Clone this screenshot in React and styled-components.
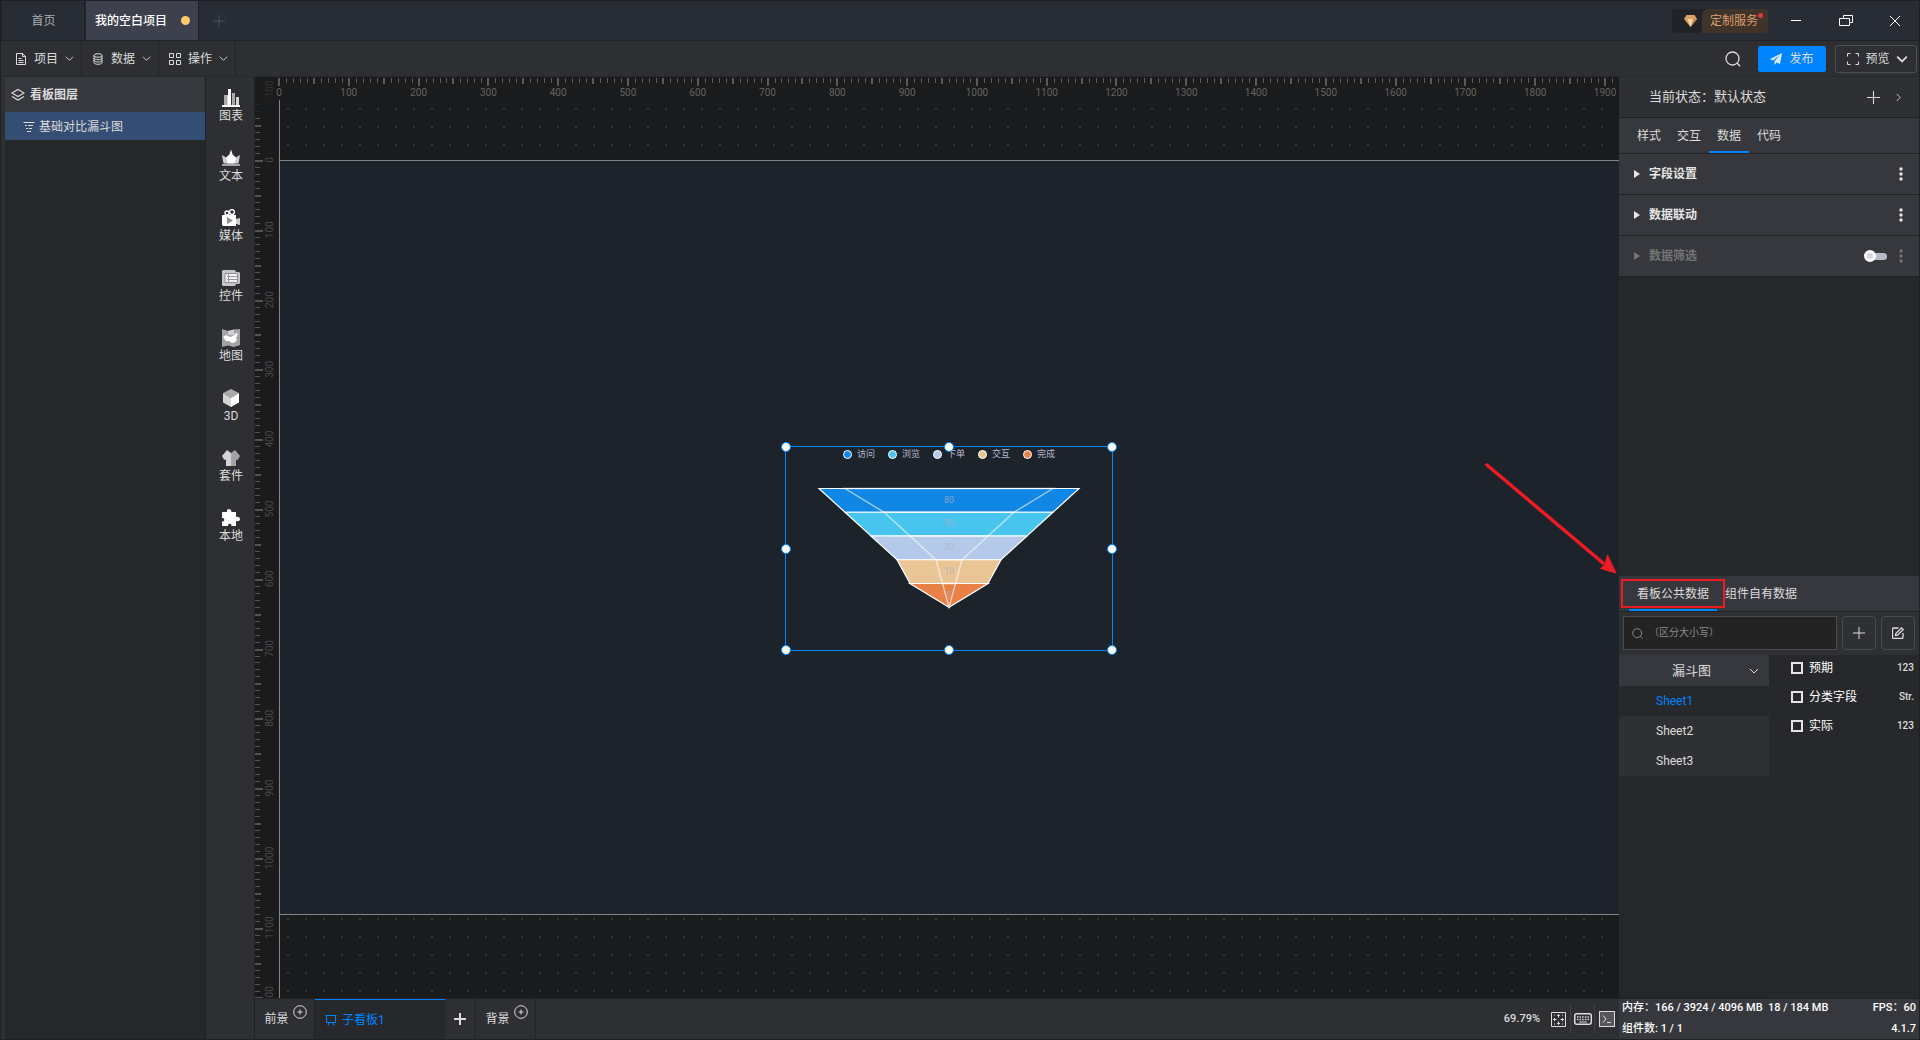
import React, { useState } from 'react';
import styled, { createGlobalStyle, css } from 'styled-components';

const GlobalStyle = createGlobalStyle`
  *, *::before, *::after {
    box-sizing: border-box;
  }
  body {
    margin: 0;
    background: #1a1b1c;
    color: #dcdcdc;
    font-family: Roboto, "Noto Sans CJK SC", sans-serif;
    font-size: 12px;
    line-height: 16px;
    overflow: hidden;
  }
  button, input {
    font: inherit;
    color: inherit;
  }
  svg {
    display: block;
    flex: none;
  }
`;

const Button = styled.button`
  display: flex;
  align-items: center;
  justify-content: center;
  padding: 0;
  border: 0;
  background: none;
  cursor: pointer;
  white-space: nowrap;
`;

const Window = styled.div`
  height: 100vh;
  display: flex;
  flex-direction: column;
  border: 1px solid #1f2023;
  border-top: 0;
  background: #2e2f33;
`;

/* title bar */

const TitleBar = styled.header`
  display: flex;
  flex: none;
  height: 41px;
  border-top: 1px solid #1f2023;
  border-bottom: 1px solid #202124;
  background: #282c34;
`;

const ProjectTab = styled(Button)`
  width: ${({ $active }) => ($active ? 114 : 84)}px;
  gap: 14px;
  padding-left: 1px;
  border: solid #1f2228;
  border-width: 0 1px;
  background: ${({ $active }) => ($active ? '#3d414e' : 'transparent')};
  color: ${({ $active }) => ($active ? '#fff' : '#a9acb2')};
  font-weight: ${({ $active }) => ($active ? 500 : 400)};
`;

const UnsavedDot = styled.span`
  width: 9px;
  height: 9px;
  border-radius: 50%;
  background: #fdca6b;
`;

const AddTab = styled(Button)`
  width: 40px;
  color: #4c5058;
`;

const WindowActions = styled.div`
  display: flex;
  align-items: center;
  margin-left: auto;
`;

const ServiceButton = styled(Button)`
  height: 24px;
  margin-right: 3px;
  border-radius: 3px;
  background: #222328;
  color: #dc9f6e;
`;

const ServiceGem = styled.span`
  display: flex;
  justify-content: center;
  width: 30px;
  padding-left: 6px;
`;

const ServiceLabel = styled.span`
  position: relative;
  width: 66px;
  padding-right: 2px;
  line-height: 24px;
  border-radius: 6px 3px 3px 0;
  background: #403329;
  &::after {
    content: '';
    position: absolute;
    top: 4px;
    right: 5px;
    width: 5px;
    height: 5px;
    border-radius: 50%;
    background: #e0373b;
  }
`;

const WindowButton = styled(Button)`
  width: 50px;
  height: 40px;
  color: #fff;
  &:last-child {
    width: 48px;
  }
`;

/* toolbar */

const Toolbar = styled.nav`
  display: flex;
  flex: none;
  height: 36px;
  padding-left: 4px;
  align-items: center;
  border-bottom: 1px solid #28292c;
`;

const MenuButton = styled(Button)`
  width: 77px;
  height: 35px;
  gap: 7px;
  padding-left: 3px;
  border-right: 1px solid #232427;
`;

const ToolbarActions = styled.div`
  display: flex;
  align-items: center;
  margin-left: auto;
  padding-right: 2px;
`;

const PublishButton = styled(Button)`
  width: 68px;
  height: 26px;
  margin: 0 9px 0 17px;
  gap: 7px;
  border-radius: 2px;
  background: #0085ff;
`;

const PreviewButton = styled(Button)`
  width: 82px;
  height: 28px;
  gap: 6px;
  padding-left: 3px;
  border: 1px solid #4c4d52;
  border-radius: 3px;
`;

/* left side */

const Body = styled.div`
  display: flex;
  flex: 1;
  min-height: 0;
  padding-left: 4px;
`;

const LayerPanel = styled.aside`
  flex: none;
  width: 201px;
  border-right: 1px solid #202124;
  background: #262729;
`;

const PanelTitle = styled.h2`
  display: flex;
  align-items: center;
  gap: 5px;
  height: 35px;
  margin: 0;
  padding-left: 6px;
  background: #37383d;
  font-size: 12px;
  font-weight: 700;
`;

const LayerItem = styled(Button)`
  justify-content: flex-start;
  width: 200px;
  height: 28px;
  gap: 4px;
  padding: 2px 0 0 18px;
  background: #344d73;
`;

const ToolColumn = styled.nav`
  flex: none;
  width: 49px;
  border-right: 1px solid #202124;
`;

const ToolButton = styled(Button)`
  flex-direction: column;
  justify-content: flex-start;
  width: 48px;
  height: 60px;
  gap: 1px;
  padding: 12px 0 0 2px;
`;

/* workspace */

const Center = styled.main`
  display: flex;
  flex: 1;
  flex-direction: column;
  min-width: 0;
`;

const Workspace = styled.div`
  display: grid;
  flex: 1;
  grid-template-columns: 24px 1fr;
  grid-template-rows: 23px 1fr;
  min-height: 0;
  overflow: hidden;
  background: #1a1b1c;
`;

const Corner = styled.div`
  width: 24px;
  height: 23px;
`;

const RulerSvg = styled.svg`
  overflow: visible;
  font-family: "Liberation Sans Narrow", Roboto, sans-serif;
  font-size: 10px;
`;

const CanvasArea = styled.div`
  min-height: 0;
  padding-top: 60px;
  overflow: hidden;
  border-left: 1px solid #858585;
  background: radial-gradient(circle at 9px 9px, #333435 1px, transparent 1px) -1px 0 / 18px 18px;
`;

const Stage = styled.div`
  position: relative;
  aspect-ratio: 1920 / 1082;
  border: solid #858585;
  border-width: 1px 0;
  background: #1c232a;
`;

const Widget = styled.section`
  position: absolute;
  left: 505px;
  top: 285px;
  width: 328px;
  height: 205px;
  border: 1px solid #0085ff;
`;

const Legend = styled.ul`
  display: flex;
  justify-content: center;
  gap: 13px;
  margin: 0;
  padding: 1px 0 0;
  list-style: none;
  color: #b9b8ce;
  font-size: 9px;
  line-height: 12px;
`;

const LegendItem = styled.li`
  display: flex;
  align-items: center;
  gap: 5px;
  &::before {
    content: '';
    width: 9px;
    height: 9px;
    border: 1px solid #fff;
    border-radius: 50%;
    background: ${({ $color }) => $color};
  }
`;

const FunnelSvg = styled.svg`
  font-size: 9px;
`;

const Handle = styled.span`
  position: absolute;
  left: ${({ $x }) => $x}%;
  top: ${({ $y }) => $y}%;
  width: 10px;
  height: 10px;
  margin: -5px;
  border: 1px solid #0085ff;
  border-radius: 50%;
  background: #fff;
`;

/* bottom bar */

const BottomBar = styled.footer`
  display: flex;
  flex: none;
  align-items: center;
  height: 41px;
  border-top: 1px solid #232427;
`;

const SceneButton = styled(Button)`
  height: 40px;
  width: 60px;
  gap: 4px;
  padding-left: 2px;
  border-right: 1px solid #232427;
  svg {
    margin-bottom: 14px;
  }
`;

const BoardTab = styled(Button)`
  justify-content: flex-start;
  width: 130px;
  height: 40px;
  gap: 5px;
  padding-left: 10px;
  border-top: 1px solid #0085ff;
  background: #27282c;
  color: #0085ff;
`;

const AddBoard = styled(Button)`
  width: 31px;
  height: 40px;
  border-right: 1px solid #232427;
`;

const ZoomValue = styled.span`
  margin-left: auto;
  padding-right: 7px;
  font-size: 11px;
  font-weight: 500;
`;

const BottomAction = styled(Button)`
  width: 24px;
  height: 28px;
  border-right: ${({ $last }) => ($last ? 0 : '1px solid #414246')};
`;

/* right side */

const Inspector = styled.aside`
  display: grid;
  flex: none;
  grid-template-rows: 500fr 422fr 41px;
  width: 300px;
  background: #262729;
`;

const StateBar = styled.div`
  display: flex;
  align-items: center;
  height: 41px;
  padding: 0 17px 0 30px;
  border-bottom: 1px solid #202124;
  background: #2f3033;
  font-size: 13px;
`;

const StateAdd = styled(Button)`
  margin: 0 15px 0 auto;
`;

const TabList = styled.div`
  display: flex;
  height: 36px;
  padding-left: 10px;
  border-bottom: 1px solid #202124;
  background: #37383d;
`;

const PanelTab = styled(Button)`
  position: relative;
  padding: 0 8px;
  border: solid transparent;
  border-width: 2px 0;
  ${({ $active }) => $active && css`
    border-bottom-color: #0085ff;
  `}
`;

const Section = styled.div`
  display: flex;
  align-items: center;
  height: 41px;
  padding: 0 16px 0 15px;
  border-bottom: 1px solid #202124;
  background: #37383d;
  color: ${({ $disabled }) => ($disabled ? '#737478' : '#e6e6e6')};
`;

const SectionTitle = styled(Button)`
  gap: 9px;
  margin-right: auto;
  font-weight: 700;
`;

const Switch = styled.input`
  appearance: none;
  position: relative;
  width: 22px;
  height: 7px;
  margin: 0 12px 0 0;
  border-radius: 4px;
  background: #b9bbca;
  &::before {
    content: '';
    position: absolute;
    left: -1px;
    top: -3px;
    width: 12px;
    height: 12px;
    border: 3px solid #fff;
    border-radius: 50%;
    background: #d5d5da;
  }
`;

const DataPanel = styled.section`
  position: relative;
  display: flex;
  flex-direction: column;
  min-height: 0;
`;

const RedBox = styled.span`
  position: absolute;
  left: 2px;
  top: 3px;
  width: 104px;
  height: 29px;
  border: 2px solid #ed1c24;
  pointer-events: none;
`;

const ArrowSvg = styled.svg`
  position: absolute;
  left: -134px;
  top: -114px;
  pointer-events: none;
`;

const SearchRow = styled.div`
  display: flex;
  gap: 5px;
  height: 43px;
  padding: 4px;
  background: #2f3033;
`;

const SearchBox = styled.label`
  display: flex;
  flex: 1;
  align-items: center;
  gap: 6px;
  height: 34px;
  padding-left: 8px;
  border: 1px solid #4a4b4f;
  background: #232324;
  color: #8c8c8c;
`;

const SearchInput = styled.input`
  flex: 1;
  width: 100%;
  padding: 0;
  border: 0;
  outline: 0;
  background: none;
  font-size: 10px;
  &::placeholder {
    color: #8c8c8c;
  }
`;

const SquareButton = styled(Button)`
  width: 34px;
  height: 34px;
  border: 1px solid #4a4b4f;
  border-radius: 4px;
`;

const DataColumns = styled.div`
  display: flex;
  flex: 1;
`;

const SheetList = styled.div`
  width: 150px;
`;

const SheetGroup = styled(Button)`
  position: relative;
  width: 150px;
  height: 31px;
  padding-right: 5px;
  background: #37383d;
  font-size: 13px;
  svg {
    position: absolute;
    right: 10px;
  }
`;

const SheetButton = styled(Button)`
  justify-content: flex-start;
  width: 150px;
  height: 30px;
  padding-left: 37px;
  background: ${({ $active }) => ($active ? '#27282c' : '#2f3033')};
  color: ${({ $active }) => ($active ? '#0085ff' : '#dcdcdc')};
`;

const FieldList = styled.div`
  flex: 1;
  background: #27282c;
`;

const Field = styled.label`
  display: flex;
  align-items: center;
  gap: 6px;
  height: 29px;
  padding: 0 5px 3px 22px;
  color: #fff;
`;

const FieldCheck = styled.input`
  appearance: none;
  width: 12px;
  height: 12px;
  margin: 0;
  border: 2px solid #e4e4e4;
`;

const FieldType = styled.span`
  margin-left: auto;
  color: #dcdcdc;
  font-size: 10px;
  font-weight: 500;
`;

const Stats = styled.div`
  display: flex;
  flex-wrap: wrap;
  align-content: center;
  row-gap: 5px;
  padding: 0 3px;
  border-top: 1px solid #232427;
  background: #37383d;
  color: #fff;
  font-size: 11px;
  font-weight: 500;
`;

const StatsLine = styled.div`
  display: flex;
  justify-content: space-between;
  width: 100%;
`;

const StrokeSvg = ({ size = 12, box = 12, width = 1, children, ...rest }) => (
  <svg
    width={size}
    height={size}
    viewBox={`0 0 ${box} ${box}`}
    fill="none"
    stroke="currentColor"
    strokeWidth={width}
    {...rest}
  >
    {children}
  </svg>
);

const Plus = ({ size = 12, width = 1 }) => (
  <StrokeSvg size={size} width={width}>
    <path d="M6 0v12M0 6h12" />
  </StrokeSvg>
);

const Chevron = ({ size = 9, width = 1 }) => (
  <StrokeSvg size={size} box={10} width={width}>
    <path d="M1 3l4 4 4-4" />
  </StrokeSvg>
);

const SearchIcon = ({ size = 16, width = 1 }) => (
  <StrokeSvg size={size} box={16} width={width}>
    <circle cx="7.5" cy="7.5" r="6.5" />
    <path d="M12 12l3.2 3.2" />
  </StrokeSvg>
);

const MoreDots = () => (
  <svg width="4" height="14" viewBox="0 0 4 14" fill="currentColor">
    <circle cx="2" cy="2" r="1.7" />
    <circle cx="2" cy="7" r="1.7" />
    <circle cx="2" cy="12" r="1.7" />
  </svg>
);

const CirclePlus = () => (
  <StrokeSvg size={14} box={14}>
    <circle cx="7" cy="7" r="6.3" />
    <path d="M7 4.5v5M4.5 7h5" />
  </StrokeSvg>
);

const menus = [
  {
    name: '项目',
    icon: <path d="M1.5 .5h6l3 3v8h-9zM7.5 .5v3h3M3.5 5.5h3M3.5 7.5h5M3.5 9.5h5" />,
  },
  {
    name: '数据',
    icon: (
      <>
        <ellipse cx="6" cy="2.5" rx="4" ry="1.8" />
        <path d="M2 2.5v7c0 2.4 8 2.4 8 0v-7M2 5c0 2.3 8 2.3 8 0M2 7.3c0 2.3 8 2.3 8 0" />
      </>
    ),
  },
  {
    name: '操作',
    icon: <path d="M.5 .5h4v4h-4zM7.5 .5h4v4h-4zM.5 7.5h4v4h-4zM7.5 7.5h4v4h-4z" />,
  },
];

const tools = [
  {
    name: '图表',
    icon: (
      <>
        <path fill="#aaabad" d="M2 6h3v10H2zM10 4h3v12h-3z" />
        <path fill="#fff" d="M6 0h3v16H6zM0 16h18v2H0z" />
        <path fill="#d4d4d5" d="M14 8h3v8h-3zM5 6h1v10H5z" />
      </>
    ),
  },
  {
    name: '文本',
    icon: (
      <>
        <path fill="#cfcfd1" d="M0 6l5 3h8l5-3-1.5 8.5h-15z" />
        <path fill="#fff" d="M9 .5l1.6 5L14 8.5l-1.5 6h-7L4 8.5l3.4-3z" />
        <path fill="#a2a3a6" d="M0 15h18v2H0z" />
      </>
    ),
  },
  {
    name: '媒体',
    icon: (
      <>
        <circle cx="5" cy="4" r="2" fill="none" stroke="#fff" strokeWidth="1.4" />
        <circle cx="10" cy="3" r="2.4" fill="none" stroke="#fff" strokeWidth="1.4" />
        <path fill="#fff" d="M0 6h14v11H1l-1-1z" />
        <path fill="#cfcfd1" d="M14 10l4-1v7l-4-1z" />
        <path fill="#8d8e91" d="M5 8l6 3.5L5 15z" />
      </>
    ),
  },
  {
    name: '控件',
    icon: (
      <>
        <path fill="#c4c5c7" d="M1 1h12l1 2h3l1 1v10l-1 1h-3l-1 2H1l-1-1V2z" />
        <path fill="#f2f2f2" stroke="#8d8e91" d="M3 4.5h12.5v9H3z" />
        <path stroke="#97989b" d="M5 7.5h10M5 10.5h10M6.5 5v8" />
      </>
    ),
  },
  {
    name: '地图',
    icon: (
      <>
        <path fill="#a2a3a6" d="M0 0l6 2 6-1.5L18 0v16l-6 2-6-1.5L0 18z" />
        <path fill="#cfcfd1" d="M6 2l6-1.5V6H6z" />
        <path fill="#fff" d="M1 8l3-2 4 2 3-1 3-3 2 1-2 4 1 2-3 3-3-.5L7 12H4z" />
      </>
    ),
  },
  {
    name: '3D',
    icon: (
      <>
        <path fill="#a8a9ab" d="M9 0l8 4-8 5-8-5z" />
        <path fill="#d4d4d5" d="M1 4l8 5v9l-8-4.5z" />
        <path fill="#fff" d="M17 4L9 9v9l8-4.5z" />
      </>
    ),
  },
  {
    name: '套件',
    icon: (
      <>
        <path fill="#d4d4d5" d="M5 1l4 3v13H4v-6l-2-.5L0 7z" />
        <path fill="#a2a3a6" d="M13 1L9 4v13h5v-6l2-.5L18 7z" />
      </>
    ),
  },
  {
    name: '本地',
    icon: (
      <path
        fill="#fff"
        d="M0 3h5C4.500 1 6-.2 7.500 .2S9.800 2 9.300 3H14v5c2-.8 4 .2 4 2s-2 2.800-4 2v5H9.500c.5-3-4-3-3.500 0H0v-4.500c3 .4 3-4 0-3.500z"
      />
    ),
  },
];

const SCALE = 0.6979;

const tickLength = (index) => {
  if (index % 10 === 0) return 8;
  return index % 5 === 0 ? 6 : 5;
};

const range = (from, to) => Array.from({ length: to - from + 1 }, (_, i) => i + from);

function TopRuler() {
  return (
    <RulerSvg width="100%" height="23">
      {range(0, 191).map((i) => {
        const big = i % 5 === 0;
        return (
          <rect
            key={i}
            x={Math.round(i * 10 * SCALE) - (big ? 1 : 0)}
            y="1"
            width={big ? 2 : 1}
            height={tickLength(i)}
            fill="#5c5a58"
          />
        );
      })}
      {range(0, 19).map((i) => (
        <text key={i} x={i * 100 * SCALE} y="19" textAnchor="middle" fill="#666361">
          {i * 100}
        </text>
      ))}
    </RulerSvg>
  );
}

function LeftRuler() {
  return (
    <RulerSvg width="24" height="100%">
      {range(-8, 120).map((i) => {
        const y = Math.round(60 + i * 10 * SCALE);
        return (
          <rect
            key={i}
            x="0"
            y={y}
            width={tickLength(i)}
            height={i % 5 === 0 ? 2 : 1}
            fill="#555453"
            opacity={i < -6 ? 0.2 : 1}
          />
        );
      })}
      {range(-1, 12).map((i) => (
        <text
          key={i}
          transform={`translate(18 ${60 + i * 100 * SCALE}) rotate(-90)`}
          textAnchor="middle"
          fill="#4b4a4a"
          opacity={i < 0 ? 0.5 : 1}
        >
          {i * 100}
        </text>
      ))}
    </RulerSvg>
  );
}

const funnel = [
  { name: '访问', value: 80, color: '#1086e5', outer: [34, 294, 60, 268], inner: [60, 268, 99, 229] },
  { name: '浏览', value: 50, color: '#48c5ee', outer: [60, 268, 86, 242], inner: [99, 229, 125, 203] },
  { name: '下单', value: 30, color: '#b5caea', outer: [86, 242, 112, 216], inner: [125, 203, 151, 177] },
  { name: '交互', value: 10, color: '#eac697', outer: [112, 216, 125, 203], inner: [151, 177, 157.5, 170.5] },
  { name: '完成', value: 5, color: '#e98147', outer: [125, 203, 164, 164], inner: [157.5, 170.5, 164, 164] },
];

const FUNNEL_TOP = 28.5;
const ROW = 23.75;

const trapezoid = ([topLeft, topRight, bottomLeft, bottomRight], row) => {
  const top = FUNNEL_TOP + row * ROW;
  const bottom = top + ROW;
  return `${topLeft},${top} ${topRight},${top} ${bottomRight},${bottom} ${bottomLeft},${bottom}`;
};

const handles = [[0, 0], [50, 0], [100, 0], [0, 50], [100, 50], [0, 100], [50, 100], [100, 100]];

function FunnelWidget() {
  return (
    <Widget>
      <Legend>
        {funnel.map(({ name, color }) => (
          <LegendItem key={name} $color={color}>{name}</LegendItem>
        ))}
      </Legend>
      <FunnelSvg width="326" height="170" viewBox="1 0 326 170">
        {funnel.map(({ name, color, outer }, row) => (
          <polygon key={name} points={trapezoid(outer, row)} fill={color} stroke="#fff" strokeWidth="1.2" />
        ))}
        {funnel.map(({ name, color, inner }, row) => (
          <polygon
            key={name}
            points={trapezoid(inner, row)}
            fill={color}
            stroke="#fff"
            strokeWidth="1.4"
            opacity="0.6"
          />
        ))}
        {funnel.map(({ name, value }, row) => (
          <text
            key={name}
            x="164"
            y={FUNNEL_TOP + row * ROW + 14}
            textAnchor="middle"
            fill="#a9b4c4"
            opacity="0.75"
          >
            {value}
          </text>
        ))}
      </FunnelSvg>
      {handles.map(([x, y]) => <Handle key={`${x}-${y}`} $x={x} $y={y} />)}
    </Widget>
  );
}

function Header() {
  return (
    <TitleBar>
      <ProjectTab>首页</ProjectTab>
      <ProjectTab $active>
        我的空白项目
        <UnsavedDot />
      </ProjectTab>
      <AddTab aria-label="新建"><Plus /></AddTab>
      <WindowActions>
        <ServiceButton>
          <ServiceGem>
            <svg width="13" height="12" viewBox="0 0 13 12">
              <path fill="#dda066" d="M2.500 0h8L13 4 6.500 12 0 4z" />
              <path fill="#f7d9ab" d="M3.500 4h6l-3 8z" />
              <path fill="#c78548" d="M9.500 4H13l-6.500 8z" />
            </svg>
          </ServiceGem>
          <ServiceLabel>定制服务</ServiceLabel>
        </ServiceButton>
        <WindowButton aria-label="最小化">
          <StrokeSvg size={10} box={10}><path d="M0 4.500h10" /></StrokeSvg>
        </WindowButton>
        <WindowButton aria-label="还原">
          <StrokeSvg size={14} box={14}>
            <path d="M.5 4.500h10v7H.5zM4.500 4.500v-3h9v7h-3" />
          </StrokeSvg>
        </WindowButton>
        <WindowButton aria-label="关闭">
          <StrokeSvg size={10} box={10}><path d="M0 0l10 10M10 0L0 10" /></StrokeSvg>
        </WindowButton>
      </WindowActions>
    </TitleBar>
  );
}

function MainToolbar() {
  return (
    <Toolbar>
      {menus.map(({ name, icon }) => (
        <MenuButton key={name}>
          <StrokeSvg>{icon}</StrokeSvg>
          {name}
          <Chevron />
        </MenuButton>
      ))}
      <ToolbarActions>
        <Button aria-label="搜索"><SearchIcon width={1.3} /></Button>
        <PublishButton>
          <svg width="12" height="12" viewBox="0 0 12 12" fill="#d9ecff">
            <path d="M12 0L0 6l3 1.500L10 2 4.500 8.200V12l2-2.500L10 11z" />
          </svg>
          发布
        </PublishButton>
        <PreviewButton>
          <StrokeSvg><path d="M.5 3.500v-3h3M8.500 .5h3v3M11.500 8.500v3h-3M3.500 11.500h-3v-3" /></StrokeSvg>
          预览
          <Chevron size={12} width={1.5} />
        </PreviewButton>
      </ToolbarActions>
    </Toolbar>
  );
}

function BoardBar() {
  return (
    <BottomBar>
      <SceneButton>前景<CirclePlus /></SceneButton>
      <BoardTab>
        <StrokeSvg><path d="M.5 1.500h11M1.500 1.500v7h9v-7M4 8.500l-1 3M8 8.500l1 3" /></StrokeSvg>
        子看板1
      </BoardTab>
      <AddBoard aria-label="添加子看板"><Plus width={2} /></AddBoard>
      <SceneButton>背景<CirclePlus /></SceneButton>
      <ZoomValue>69.79%</ZoomValue>
      <BottomAction aria-label="适应画布">
        <StrokeSvg size={15} box={15}>
          <path d="M.5 .5h14v14H.5zM7.500 2.500v3M7.500 9.500v3M2.500 7.500h3M9.500 7.500h3" />
          <path d="M6 4l1.500-1.500L9 4M6 11l1.500 1.500L9 11M4 6L2.500 7.500 4 9M11 6l1.500 1.500L11 9M3 3h1M11 3h1M3 12h1M11 12h1" />
        </StrokeSvg>
      </BottomAction>
      <BottomAction aria-label="快捷键">
        <svg width="18" height="12" viewBox="0 0 18 12" fill="none" stroke="currentColor">
          <rect x=".75" y=".75" width="16.500" height="10.500" rx="2" strokeWidth="1.500" />
          <path d="M3 4h12M3 6.500h12" strokeWidth="1.400" strokeDasharray="1.500 1.100" />
          <path d="M5 9h8" />
        </svg>
      </BottomAction>
      <BottomAction $last aria-label="控制台">
        <StrokeSvg size={16} box={16}>
          <rect x=".5" y=".5" width="15" height="15" fill="#55565a" />
          <path d="M4 4.500L7 8l-3 3.500M8 11.500h4" />
        </StrokeSvg>
      </BottomAction>
    </BottomBar>
  );
}

const panelTabs = ['样式', '交互', '数据', '代码'];
const sections = ['字段设置', '数据联动', '数据筛选'];
const sheets = ['Sheet1', 'Sheet2', 'Sheet3'];
const fields = [
  { name: '预期', type: '123' },
  { name: '分类字段', type: 'Str.' },
  { name: '实际', type: '123' },
];

function DataSource() {
  const [sheet, setSheet] = useState('Sheet1');
  return (
    <DataPanel>
      <TabList>
        <PanelTab $active>看板公共数据</PanelTab>
        <PanelTab>组件自有数据</PanelTab>
      </TabList>
      <SearchRow>
        <SearchBox>
          <SearchIcon size={11} width={1.4} />
          <SearchInput placeholder="（区分大小写）" aria-label="搜索字段" />
        </SearchBox>
        <SquareButton aria-label="添加"><Plus /></SquareButton>
        <SquareButton aria-label="编辑">
          <StrokeSvg width={1.3}>
            <path d="M6.500 1H1.500a1 1 0 0 0-1 1v8.500a1 1 0 0 0 1 1H10a1 1 0 0 0 1-1V6" />
            <path d="M3.500 8.500l.4-2L9.500 .9l1.700 1.700L5.500 8.200z" />
          </StrokeSvg>
        </SquareButton>
      </SearchRow>
      <DataColumns>
        <SheetList>
          <SheetGroup>
            漏斗图
            <Chevron size={10} />
          </SheetGroup>
          {sheets.map((name) => (
            <SheetButton key={name} $active={name === sheet} onClick={() => setSheet(name)}>
              {name}
            </SheetButton>
          ))}
        </SheetList>
        <FieldList>
          {fields.map(({ name, type }) => (
            <Field key={name}>
              <FieldCheck type="checkbox" />
              {name}
              <FieldType>{type}</FieldType>
            </Field>
          ))}
        </FieldList>
      </DataColumns>
      <RedBox />
      <ArrowSvg width="134" height="114" viewBox="0 0 134 114">
        <path d="M2 3l116 98" stroke="#ed1c24" strokeWidth="3.500" strokeLinecap="round" />
        <path d="M131 111l-15.500-4.500 4.500-4 2.500-9.500z" fill="#ed1c24" stroke="#ed1c24" />
      </ArrowSvg>
    </DataPanel>
  );
}

function App() {
  return (
    <>
      <GlobalStyle />
      <Window>
        <Header />
        <MainToolbar />
        <Body>
          <LayerPanel>
            <PanelTitle>
              <StrokeSvg size={14} box={14} width={1.2}>
                <path d="M7 1.500L13 5 7 8.500 1 5zM1 8.500L7 12l6-3.500" />
              </StrokeSvg>
              看板图层
            </PanelTitle>
            <LayerItem>
              <StrokeSvg width={1.2}>
                <path d="M.5 1.500h11M2 4.500h2M5 4.500h5M3 7.500h2M6 7.500h3M4 10.500h4" />
              </StrokeSvg>
              基础对比漏斗图
            </LayerItem>
          </LayerPanel>
          <ToolColumn>
            {tools.map(({ name, icon }) => (
              <ToolButton key={name}>
                <svg width="18" height="18" viewBox="0 0 18 18">{icon}</svg>
                {name}
              </ToolButton>
            ))}
          </ToolColumn>
          <Center>
            <Workspace>
              <Corner />
              <TopRuler />
              <LeftRuler />
              <CanvasArea>
                <Stage>
                  <FunnelWidget />
                </Stage>
              </CanvasArea>
            </Workspace>
            <BoardBar />
          </Center>
          <Inspector>
            <div>
              <StateBar>
                当前状态：默认状态
                <StateAdd aria-label="添加状态"><Plus size={13} /></StateAdd>
                <StrokeSvg size={7} box={8}><path d="M2 0l4 4-4 4" /></StrokeSvg>
              </StateBar>
              <TabList>
                {panelTabs.map((name) => (
                  <PanelTab key={name} $active={name === '数据'}>{name}</PanelTab>
                ))}
              </TabList>
              {sections.map((name, index) => (
                <Section key={name} $disabled={index === 2}>
                  <SectionTitle>
                    <svg width="6" height="8" viewBox="0 0 6 8" fill="currentColor">
                      <path d="M0 0l6 4-6 4z" />
                    </svg>
                    {name}
                  </SectionTitle>
                  {index === 2 && <Switch type="checkbox" role="switch" aria-label={name} />}
                  <Button aria-label="更多"><MoreDots /></Button>
                </Section>
              ))}
            </div>
            <DataSource />
            <Stats>
              <StatsLine>
                <span>内存：166 / 3924 / 4096 MB&nbsp; 18 / 184 MB</span>
                <span>FPS：60</span>
              </StatsLine>
              <StatsLine>
                <span>组件数: 1 / 1</span>
                <span>4.1.7</span>
              </StatsLine>
            </Stats>
          </Inspector>
        </Body>
      </Window>
    </>
  );
}

export default App;
